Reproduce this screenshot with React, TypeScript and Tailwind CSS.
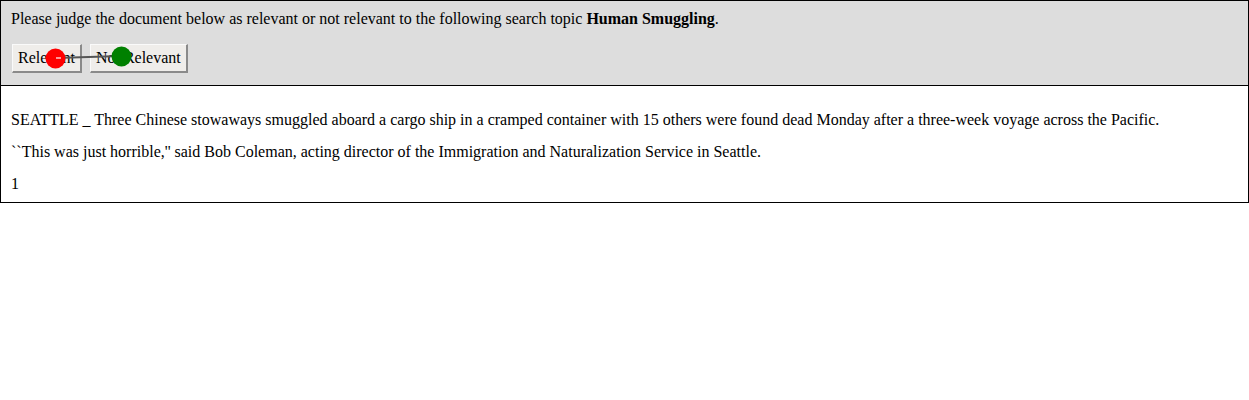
import React from "react";

const serif = { fontFamily: '"Liberation Serif", "Times New Roman", serif' };

function Btn({ children }: { children: React.ReactNode }) {
  return (
    <button
      className="h-[29px] px-[5px] bg-[#efedea] text-[16px] leading-[18px] text-black border-t border-l border-t-[#fafafa] border-l-[#fafafa] border-b-2 border-r-2 border-b-[#8a8a8a] border-r-[#8a8a8a]"
      style={serif}
    >
      {children}
    </button>
  );
}

export default function App() {
  return (
    <div className="w-[1249px] h-[400px] bg-white text-black text-[16px]" style={serif}>
      <div className="border border-black">
        <div className="relative bg-[#dddddd] border-b border-black pl-[10px] pt-[9px] pb-[12px]">
          <p className="leading-[18px]">
            Please judge the document below as relevant or not relevant to the following search topic{" "}
            <b>Human Smuggling</b>.
          </p>
          <div className="flex gap-[8px] mt-[16px] ml-[1px]">
            <Btn>Relevant</Btn>
            <Btn>Not Relevant</Btn>
          </div>
          <svg className="absolute left-0 top-0 pointer-events-none" width="200" height="85">
            <line x1="55" y1="57" x2="120" y2="55" stroke="#555" strokeWidth="2" />
            <circle cx="54.5" cy="57.5" r="10" fill="#ff0000" />
            <line x1="55" y1="57" x2="60" y2="57" stroke="#ffffff" strokeWidth="1.2" />
            <circle cx="120.5" cy="55.5" r="10" fill="#008000" />
          </svg>
        </div>
        <div className="pl-[10px] pt-[25px] pb-[9px]">
          <p className="leading-[18px] mb-[14px]">
            SEATTLE _ Three Chinese stowaways smuggled aboard a cargo ship in a cramped container with 15 others were found dead Monday after a three-week voyage across the Pacific.
          </p>
          <p className="leading-[18px] mb-[14px]">
            ``This was just horrible,'' said Bob Coleman, acting director of the Immigration and Naturalization Service in Seattle.
          </p>
          <p className="leading-[18px]">1</p>
        </div>
      </div>
    </div>
  );
}
